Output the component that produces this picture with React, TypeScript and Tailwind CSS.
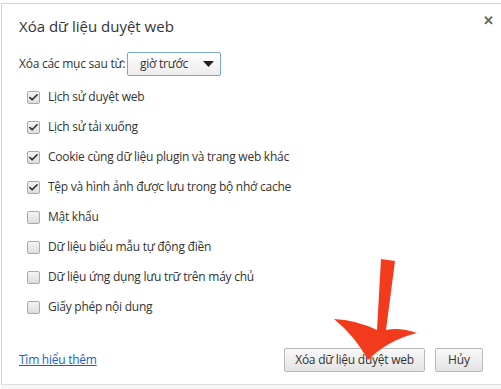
import { Check } from 'lucide-react';

const items = [
  { label: 'Lịch sử duyệt web', checked: true },
  { label: 'Lịch sử tải xuống', checked: true },
  { label: 'Cookie cùng dữ liệu plugin và trang web khác', checked: true },
  { label: 'Tệp và hình ảnh được lưu trong bộ nhớ cache', checked: true },
  { label: 'Mật khẩu', checked: false },
  { label: 'Dữ liệu biểu mẫu tự động điền', checked: false },
  { label: 'Dữ liệu ứng dụng lưu trữ trên máy chủ', checked: false },
  { label: 'Giấy phép nội dung', checked: false },
];

function Box({ checked }: { checked: boolean }) {
  return (
    <div className="w-[13px] h-[13px] rounded-[2px] border border-[#a9a9a9] bg-gradient-to-b from-[#f4f4f4] to-[#dedede] flex items-center justify-center">
      {checked && <Check size={11} strokeWidth={3.5} className="text-[#2b2b2b]" />}
    </div>
  );
}

export default function App() {
  return (
    <div className="relative w-[501px] h-[389px] bg-white pt-[3px] pl-[1px] text-[#333] font-['Open_Sans',sans-serif]">
      <div className="h-[381px] border-t border-l border-[#d4d4d4] flex flex-col">
        <div className="flex items-start justify-between pl-[17px] pr-[6px] pt-[11px]">
          <div className="text-[15px] leading-[22px] text-[#333]">Xóa dữ liệu duyệt web</div>
          <div className="w-[14px] h-[14px] -mt-[2px] flex items-center justify-center text-[#666] text-[13px] font-bold leading-none">
            ✕
          </div>
        </div>

        <div className="flex items-center pl-[17px] mt-[15px] text-[12px] tracking-[-0.25px]">
          <span>Xóa các mục sau từ:</span>
          <div className="ml-[2px] w-[94px] h-[24px] rounded-[2px] border border-[#7ba6d6] bg-gradient-to-b from-white to-[#ececec] flex items-center justify-between pl-[12px] pr-[6px]">
            <span>giờ trước</span>
            <svg width="11" height="6" viewBox="0 0 11 6">
              <path d="M0 0 L11 0 L5.5 6 Z" fill="#222" />
            </svg>
          </div>
        </div>

        <div className="flex flex-col pl-[25px] mt-[6px]">
          {items.map((it) => (
            <div key={it.label} className="h-[30px] flex items-center gap-[8px] text-[12px] tracking-[-0.25px]">
              <Box checked={it.checked} />
              <span>{it.label}</span>
            </div>
          ))}
        </div>

        <div className="flex-1 flex items-end justify-between pl-[17px] pr-[18px] pb-[12px]">
          <a className="text-[12px] tracking-[-0.25px] text-[#1a5fc7] underline mb-[3px]">Tìm hiểu thêm</a>
          <div className="flex gap-[10px]">
            <button className="h-[24px] w-[141px] rounded-[2px] border border-[#b8b8b8] bg-gradient-to-b from-[#f8f8f8] to-[#e4e4e4] text-[12px] tracking-[-0.25px] text-[#333]">
              Xóa dữ liệu duyệt web
            </button>
            <button className="h-[24px] w-[48px] rounded-[2px] border border-[#b8b8b8] bg-gradient-to-b from-[#f8f8f8] to-[#e4e4e4] text-[12px] text-[#333]">
              Hủy
            </button>
          </div>
        </div>
      </div>
      <div className="h-[1px] bg-[#e0e0e0]" />
      <div className="h-[4px] bg-[#f7f7f7]" />

      <svg className="absolute left-0 top-0 pointer-events-none" width="501" height="389" viewBox="0 0 501 389">
        <path
          d="M381 259 L395 261 L386 330 Q400 327 417 333 Q388 340 368 360 Q355 336 334 319 Q356 320 377 330 Z"
          fill="#f23a1c"
        />
      </svg>
    </div>
  );
}
